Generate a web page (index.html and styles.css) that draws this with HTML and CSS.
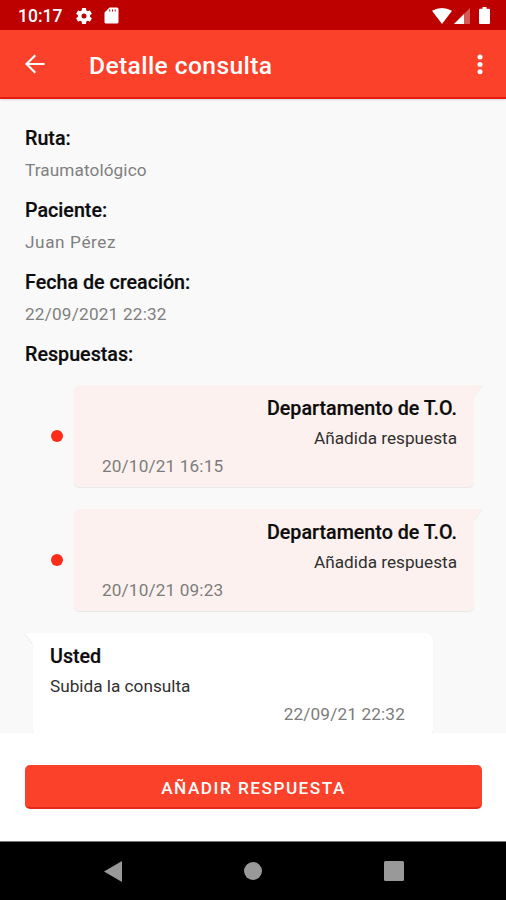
FILE: index.html
```html
<!DOCTYPE html>
<html lang="es">
<head>
<meta charset="utf-8">
<title>Detalle consulta</title>
<link rel="stylesheet" href="styles.css">
</head>
<body>
<header class="status">
  <span class="clock">10:17</span>
  <svg class="gear" width="20" height="20" viewBox="0 0 24 24"><path d="M19.14 12.94c.04-.3.06-.61.06-.94 0-.32-.02-.64-.07-.94l2.03-1.58a.49.49 0 0 0 .12-.61l-1.92-3.32a.49.49 0 0 0-.59-.22l-2.39.96c-.5-.38-1.03-.7-1.62-.94l-.36-2.54a.48.48 0 0 0-.48-.41h-3.84c-.24 0-.43.17-.47.41l-.36 2.54c-.59.24-1.13.57-1.62.94l-2.39-.96a.48.48 0 0 0-.59.22L2.74 8.87c-.12.21-.08.47.12.61l2.03 1.58c-.05.3-.09.63-.09.94s.02.64.07.94l-2.03 1.58a.49.49 0 0 0-.12.61l1.92 3.32c.12.22.37.29.59.22l2.39-.96c.5.38 1.03.7 1.62.94l.36 2.54c.05.24.24.41.48.41h3.84c.24 0 .44-.17.47-.41l.36-2.54c.59-.24 1.13-.56 1.62-.94l2.39.96c.22.08.47 0 .59-.22l1.92-3.32a.48.48 0 0 0-.12-.61zM12 15a3 3 0 1 1 0-6 3 3 0 0 1 0 6z"/></svg>
  <svg class="card-icon" width="15" height="17" viewBox="0 0 15 17"><path fill-rule="evenodd" d="M5.500.5H13q1.500 0 1.500 1.500v13q0 1.500-1.500 1.500H2Q.5 16.500.5 15V5.500zM5.300 2.500v2h1v-2zM8 2.500v2h1v-2zM10.700 2.500v2h1v-2z"/></svg>
  <span class="spacer"></span>
  <svg width="20" height="16" viewBox="0 0 20 16"><path d="M0 2.800Q10-2.600 20 2.800L10 16z"/></svg>
  <svg class="signal" width="16" height="16" viewBox="0 0 16 16"><path opacity=".35" d="M16 0v16H0z"/><path d="M10 6v10H0z"/></svg>
  <svg class="battery" width="11" height="17" viewBox="0 0 11 17"><path d="M3.500 0h4v1.700H10q1 0 1 1V16q0 1-1 1H1q-1 0-1-1V2.700q0-1 1-1h2.500z"/></svg>
</header>
<nav class="appbar">
  <svg width="20" height="20" viewBox="0 0 20 20"><path class="arrow" d="M19.500 10H1.800M10.300 1.200 1.500 10l8.800 8.800"/></svg>
  <h1>Detalle consulta</h1>
  <svg width="6" height="21" viewBox="0 0 6 21"><circle cx="3" cy="3" r="2.500"/><circle cx="3" cy="10.400" r="2.500"/><circle cx="3" cy="17.800" r="2.500"/></svg>
</nav>
<main>
  <dl>
    <dt>Ruta:</dt><dd>Traumatológico</dd>
    <dt>Paciente:</dt><dd class="name">Juan Pérez</dd>
    <dt>Fecha de creación:</dt><dd class="date">22/09/2021 22:32</dd>
    <dt>Respuestas:</dt>
  </dl>
  <section class="row">
    <i class="dot"></i>
    <article class="bubble reply">
      <svg class="tail" width="9" height="12" viewBox="0 0 9 12"><path class="tail-fill" d="M0 0h8.500L0 11z"/><path class="tail-edge" d="m8.500.5-8 10.500"/></svg>
      <h2>Departamento de T.O.</h2><p>Añadida respuesta</p><time>20/10/21 16:15</time>
    </article>
  </section>
  <section class="row">
    <i class="dot"></i>
    <article class="bubble reply">
      <svg class="tail" width="9" height="12" viewBox="0 0 9 12"><path class="tail-fill" d="M0 0h8.500L0 11z"/><path class="tail-edge" d="m8.500.5-8 10.500"/></svg>
      <h2>Departamento de T.O.</h2><p>Añadida respuesta</p><time>20/10/21 09:23</time>
    </article>
  </section>
  <section class="row mine">
    <article class="bubble own">
      <svg class="tail" width="9" height="12" viewBox="0 0 9 12"><path class="tail-fill" d="M9 0H.5L9 11z"/><path class="tail-edge" d="m.5.5 8 10.500"/></svg>
      <h2>Usted</h2><p>Subida la consulta</p><time>22/09/21 22:32</time>
    </article>
  </section>
</main>
<footer class="actions"><button>AÑADIR RESPUESTA</button></footer>
<div class="sysnav">
  <svg width="18" height="21" viewBox="0 0 18 21"><path d="M18 0v21L0 10.500z"/></svg>
  <svg width="18" height="18" viewBox="0 0 18 18"><circle cx="9" cy="9" r="9"/></svg>
  <svg width="20" height="20" viewBox="0 0 20 20"><rect width="20" height="20" rx="1.500"/></svg>
</div>
</body>
</html>
```

FILE: styles.css
```css
* { box-sizing: border-box; }
body { margin: 0; width: 506px; height: 900px; overflow: hidden; display: flex; flex-direction: column; font-family: Roboto, sans-serif; background: #f9f9f9; color: #0c0c0c; white-space: nowrap; }
h1, h2, p, dl, dd { margin: 0; }
svg { display: block; flex: none; fill: #fff; }
.status { height: 30px; flex: none; background: #bd0000; display: flex; align-items: center; padding: 1px 16px 0 18px; }
.clock { color: #fff; font-size: 17.5px; font-weight: 500; width: 56px; }
.card-icon { margin-left: 10px; }
.spacer { flex: 1; }
.signal { margin-left: 2px; }
.battery { margin-left: 9px; }
.appbar { height: 69px; flex: none; background: #fb412a; border-bottom: 2px solid #e01d10; display: flex; align-items: center; padding: 1px 23px 0 25px; box-shadow: 0 1px 2px #0002; }
.arrow { fill: none; stroke: #fff; stroke-width: 2.200; }
.appbar h1 { flex: 1; margin-left: 44px; padding-top: 3px; color: #fff; font-size: 24.600px; line-height: 30px; font-weight: 500; letter-spacing: .4px; }
main { flex: 1; min-height: 0; overflow: hidden; padding: 28px 32px 0 25px; }
dl { height: 258px; }
dt { font-size: 19.700px; line-height: 24px; font-weight: 500; height: 32px; -webkit-text-stroke: .2px; }
dd { position: relative; font-size: 17.200px; line-height: 22px; height: 40px; color: #808080; letter-spacing: .1px; }
dd.name { letter-spacing: .6px; }
dd.date { letter-spacing: .2px; }
.row { display: flex; align-items: center; height: 102px; margin-bottom: 22px; }
.dot { width: 12px; height: 12px; border-radius: 50%; background: #fb2c1a; margin: 0 11px 0 26px; flex: none; }
.bubble { position: relative; width: 400px; height: 102px; border-radius: 5px; display: flex; flex-direction: column; box-shadow: 0 1px 1px #00000012; }
.reply { background: #fcf1ef; border-top-right-radius: 0; padding: 12px 17px 0 28px; align-items: flex-end; }
.own { background: #fff; border-top-left-radius: 0; border-top-right-radius: 8px; padding: 12px 28px 0 17px; }
.mine { padding-left: 8px; }
.tail { position: absolute; top: 0; }
.reply .tail { left: 400px; }
.own .tail { right: 400px; }
.reply .tail-fill { fill: #fcf1ef; }
.tail-edge { fill: none; stroke: #ececec; stroke-width: 1; }
h2 { font-size: 19.700px; font-weight: 500; line-height: 24px; -webkit-text-stroke: .2px; }
p { font-size: 17.200px; line-height: 22px; margin-top: 6px; color: #303030; }
time { font-size: 17.200px; line-height: 22px; margin-top: 6px; color: #7c7c7c; letter-spacing: .15px; }
.reply time { align-self: flex-start; }
.own time { align-self: flex-end; }
.actions { height: 108px; flex: none; background: #fff; padding: 32px 24px 0 25px; }
button { display: block; width: 100%; height: 44px; border: 0; border-bottom: 2px solid #e52818; border-radius: 5px; background: #fb412a; color: #fff; font: 500 17.200px/20px Roboto, sans-serif; letter-spacing: 1.500px; padding: 3px 0 0; }
.sysnav { height: 59px; flex: none; background: #000; border-top: 1px solid #777; display: grid; grid-template-columns: repeat(3, 140.500px); justify-content: center; justify-items: center; align-items: center; }
.sysnav svg { fill: #999; }
```
